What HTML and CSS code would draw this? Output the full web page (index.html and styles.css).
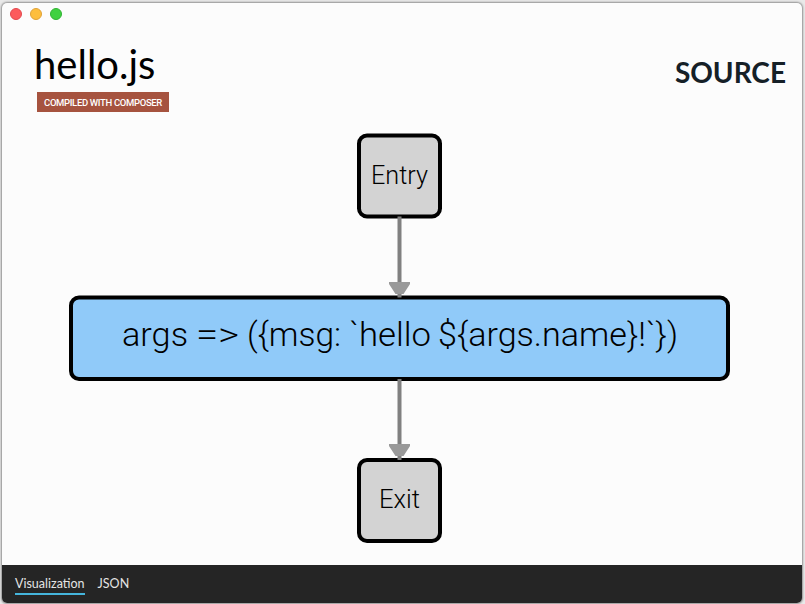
FILE: index.html
```
<!DOCTYPE html>
<html lang="en">
<head>
<meta charset="utf-8">
<title>hello.js</title>
<link rel="stylesheet" href="styles.css">
</head>
<body>
<div class="window">
  <div class="titlebar">
    <span class="light light-close"></span>
    <span class="light light-min"></span>
    <span class="light light-max"></span>
  </div>
  <header class="header">
    <div class="heading">
      <h1 class="title">hello.js</h1>
      <span class="badge">COMPILED WITH COMPOSER</span>
    </div>
    <div class="kind">SOURCE</div>
  </header>
  <main class="graph">
    <svg width="800" height="436" viewBox="2 129 800 436">
      <rect class="node" x="359" y="135.5" width="81" height="81" rx="8"/>
      <text class="label" x="371" y="184" textLength="57" lengthAdjust="spacingAndGlyphs">Entry</text>
      <rect class="node node-action" x="71" y="297.5" width="657" height="81.500" rx="8"/>
      <text class="label label-action" y="346"><tspan x="122" textLength="66" lengthAdjust="spacingAndGlyphs">args</tspan> <tspan x="196" textLength="43" lengthAdjust="spacingAndGlyphs">=&gt;</tspan> <tspan x="247" textLength="94" lengthAdjust="spacingAndGlyphs">({msg:</tspan> <tspan x="349" textLength="82" lengthAdjust="spacingAndGlyphs">`hello</tspan> <tspan x="438" textLength="240" lengthAdjust="spacingAndGlyphs">${args.name}!`})</tspan></text>
      <rect class="node" x="359" y="460" width="81" height="81" rx="8"/>
      <text class="label" x="379" y="508" textLength="41" lengthAdjust="spacingAndGlyphs">Exit</text>
      <path class="edge" d="M399.500 216.500V297.500M399.500 379V460"/>
      <path class="arrow" d="M389 282H410V284L403.500 294H395.500L389 284ZM389 444H410V446L403.500 456H395.500L389 446Z"/>
    </svg>
  </main>
  <footer class="tabs">
    <span class="tab tab-active">Visualization</span>
    <span class="tab">JSON</span>
  </footer>
</div>
</body>
</html>
```
FILE: styles.css
```
* { box-sizing: border-box; }
body {
  margin: 0;
  height: 604px;
  padding: 3px 3px 1px 2px;
  overflow: hidden;
  background: #e9e9e9;
  font-family: Lato, sans-serif;
}
.window {
  display: flex;
  flex-direction: column;
  width: 800px;
  height: 600px;
  border-radius: 5px;
  overflow: hidden;
  background: #fcfcfc;
  box-shadow: 0 0 2px 1px rgba(0, 0, 0, .38);
}
.titlebar {
  display: flex;
  gap: 8px;
  height: 22px;
  padding: 5px 8px;
}
.light {
  width: 12px;
  height: 12px;
  border: 1px solid;
  border-radius: 50%;
}
.light-close { background: #fc5b5d; border-color: #e2484d; }
.light-min { background: #fdbe3d; border-color: #dfa137; }
.light-max { background: #3fd140; border-color: #30b232; }
.header {
  display: flex;
  justify-content: space-between;
  height: 104px;
  padding: 15px 16px 0 32px;
}
.heading {
  display: flex;
  flex-direction: column;
  align-items: flex-start;
}
.title {
  margin: 0;
  font-size: 40px;
  line-height: 48px;
  font-weight: 400;
  color: #000;
}
.badge {
  width: 132px;
  height: 20px;
  margin: 4px 0 0 3px;
  background: #a6533f;
  color: #fff;
  font: 500 9.5px/21px Roboto, sans-serif;
  letter-spacing: -.34px;
  text-align: center;
  white-space: nowrap;
}
.kind {
  margin-top: 15px;
  font-size: 28px;
  line-height: 34px;
  font-weight: 700;
  color: #152027;
}
.graph { height: 436px; }
.graph svg { display: block; }
.node { fill: #d3d3d3; stroke: #000; stroke-width: 4; }
.node-action { fill: #90caf9; }
.label {
  font-family: Roboto, sans-serif;
  font-size: 25px;
  font-weight: 300;
  fill: #000;
}
.label-action { font-size: 33.500px; }
.edge { fill: none; stroke: #808080; stroke-width: 4; }
.arrow { fill: #999; }
.tabs {
  display: flex;
  gap: 13px;
  height: 38px;
  padding: 9px 13px 0;
  background: #252525;
}
.tab {
  height: 21px;
  font-size: 12.5px;
  line-height: 19px;
  color: #e4e4e4;
  font-variant-ligatures: common-ligatures discretionary-ligatures;
}
.tab-active { border-bottom: 2px solid #45b5dc; }
```
